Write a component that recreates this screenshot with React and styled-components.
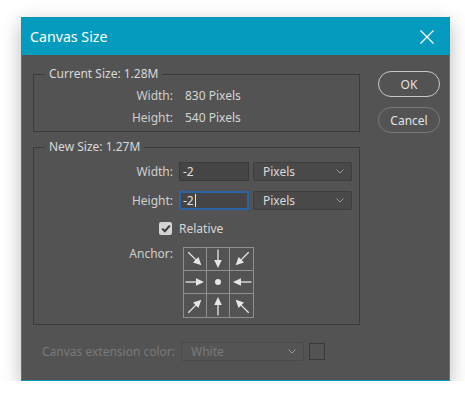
import React from 'react'
import styled, { createGlobalStyle } from 'styled-components'

const Global = createGlobalStyle`
  html, body { margin: 0; padding: 0; background: #ffffff; }
  body { font-family: "Noto Sans", "Open Sans", sans-serif; }
  * { box-sizing: border-box; }
`

const Window = styled.div`
  margin: 17px 0 0 21px;
  width: 429px;
  height: 364px;
  border: 1px solid #0a95b6;
  background: #535353;
  box-shadow: 0 6px 18px rgba(0, 0, 0, 0.28);
  display: flex;
  flex-direction: column;
`

const TitleBar = styled.div`
  height: 37px;
  background: #059bbe;
  display: flex;
  align-items: center;
  justify-content: space-between;
  padding: 0 15px 0 8px;
  color: #ffffff;
  font-size: 14.2px;
`

const Body = styled.div`
  flex: 1;
  display: grid;
  grid-template-columns: 327px 62px;
  column-gap: 18px;
  padding: 11px 0 0 11px;
  font-size: 12px;
  color: #d2d2d2;
`

const Left = styled.div`
  display: flex;
  flex-direction: column;
`

const Group = styled.fieldset`
  margin: 0 0 ${p => p.$gap || 0}px 0;
  padding: ${p => p.$pad};
  border: 1px solid #3b3b3b;
  min-width: 0;
  display: grid;
  grid-template-columns: 139px auto;
  column-gap: ${p => p.$col}px;
  row-gap: ${p => p.$row}px;
  align-items: center;
`

const Legend = styled.legend`
  margin-left: 11px;
  padding: 0 4px;
  line-height: 16px;
  color: #d8d8d8;
`

const Label = styled.div`
  text-align: right;
  line-height: 18px;
  color: #cfcfcf;
  align-self: ${p => (p.$top ? 'start' : 'center')};
  margin-top: ${p => (p.$top ? -2 : 0)}px;
`

const Value = styled.div`
  line-height: ${p => p.$lh || 18}px;
  color: #d6d6d6;
`

const Fields = styled.div`
  display: flex;
  gap: 4px;
`

const TextBox = styled.div`
  width: 70px;
  height: 19px;
  background: #454545;
  border: ${p => (p.$focus ? '2px solid #2a64a4' : '1px solid #3a3a3a')};
  padding-left: ${p => (p.$focus ? 2 : 3)}px;
  display: flex;
  align-items: center;
  color: #e0e0e0;
`

const Caret = styled.span`
  display: inline-block;
  width: 1px;
  height: 13px;
  background: #e8e8e8;
  margin-left: 1px;
`

const Select = styled.div`
  width: ${p => p.$w}px;
  height: 19px;
  background: ${p => (p.$dim ? '#545454' : '#494949')};
  border: 1px solid ${p => (p.$dim ? '#4a4a4a' : '#3e3e3e')};
  border-radius: 2px;
  padding: 0 7px 0 9px;
  display: flex;
  align-items: center;
  justify-content: space-between;
  color: ${p => (p.$dim ? '#7a7a7a' : '#dadada')};
`

const CheckCell = styled.div`
  display: flex;
  justify-content: flex-end;
  padding-right: 1px;
`

const CheckBox = styled.div`
  width: 13px;
  height: 13px;
  border-radius: 2px;
  background: #d4d4d4;
  display: flex;
  align-items: center;
  justify-content: center;
`

const Anchor = styled.div`
  width: 71px;
  height: 71px;
  margin-left: 4px;
  display: grid;
  grid-template-columns: repeat(3, 1fr);
  grid-template-rows: repeat(3, 1fr);
  border: 1px solid #8f8f8f;
`

const Cell = styled.div`
  border-right: ${p => (p.$c < 2 ? '1px solid #8f8f8f' : 'none')};
  border-bottom: ${p => (p.$r < 2 ? '1px solid #8f8f8f' : 'none')};
  display: flex;
  align-items: center;
  justify-content: center;
`

const Extension = styled.div`
  margin-top: 17px;
  padding-left: 9px;
  display: flex;
  align-items: center;
  gap: 6px;
  color: #7a7a7a;
`

const Swatch = styled.div`
  width: 16px;
  height: 17px;
  border: 1px solid #3a3a3a;
  margin-left: -1px;
`

const Buttons = styled.div`
  padding-top: 5px;
  display: flex;
  flex-direction: column;
  gap: 10px;
`

const Button = styled.div`
  height: 26px;
  border-radius: 13px;
  border: 1px solid ${p => (p.$primary ? '#c9c9c9' : '#7a7a7a')};
  display: flex;
  align-items: center;
  justify-content: center;
  color: #e2e2e2;
  font-size: 12px;
`

const Chevron = () => (
  <svg width="8" height="5" viewBox="0 0 8 5">
    <path d="M0.5 0.5 L4 4 L7.5 0.5" fill="none" stroke="#9a9a9a" strokeWidth="1" />
  </svg>
)

const Close = () => (
  <svg width="14" height="14" viewBox="0 0 14 14">
    <path d="M0.5 0.5 L13.5 13.5 M13.5 0.5 L0.5 13.5" stroke="#fff" strokeWidth="1.2" />
  </svg>
)

// rotation of the arrow (pointing right = 0) for each cell, toward the center
const angles = [45, 90, 135, 0, null, 180, -45, -90, -135]

const Arrow = ({ angle }) =>
  angle === null ? (
    <svg width="20" height="20" viewBox="0 0 20 20">
      <circle cx="10" cy="10" r="3" fill="#e6e6e6" />
    </svg>
  ) : (
    <svg width="20" height="20" viewBox="0 0 20 20">
      <g transform={`rotate(${angle} 10 10)`}>
        <path d="M0.5 10 L12 10" stroke="#e6e6e6" strokeWidth="1.3" />
        <path d="M19 10 L11 6.2 L11 13.8 Z" fill="#e6e6e6" />
      </g>
    </svg>
  )

export default function App() {
  return (
    <>
      <Global />
      <Window>
        <TitleBar>
          <span>Canvas Size</span>
          <Close />
        </TitleBar>
        <Body>
          <Left>
            <Group $pad="5px 0 4px 0" $col={12} $row={4} $gap={7}>
              <Legend>Current Size: 1.28M</Legend>
              <Label>Width:</Label>
              <Value>830 Pixels</Value>
              <Label>Height:</Label>
              <Value>540 Pixels</Value>
            </Group>
            <Group $pad="7px 0 6px 0" $col={6} $row={10}>
              <Legend>New Size: 1.27M</Legend>
              <Label>Width:</Label>
              <Fields>
                <TextBox>-2</TextBox>
                <Select $w={99}>
                  Pixels <Chevron />
                </Select>
              </Fields>
              <Label>Height:</Label>
              <Fields>
                <TextBox $focus>
                  -2<Caret />
                </TextBox>
                <Select $w={99}>
                  Pixels <Chevron />
                </Select>
              </Fields>
              <CheckCell>
                <CheckBox>
                  <svg width="10" height="9" viewBox="0 0 10 9">
                    <path d="M1.2 4.6 L3.8 7.2 L8.8 1.6" fill="none" stroke="#3a3a3a" strokeWidth="2" />
                  </svg>
                </CheckBox>
              </CheckCell>
              <Value $lh={17}>Relative</Value>
              <Label $top>Anchor:</Label>
              <Anchor>
                {angles.map((a, i) => (
                  <Cell key={i} $r={Math.floor(i / 3)} $c={i % 3}>
                    <Arrow angle={a} />
                  </Cell>
                ))}
              </Anchor>
            </Group>
            <Extension>
              <span>Canvas extension color:</span>
              <Select $w={123} $dim>
                White <Chevron />
              </Select>
              <Swatch />
            </Extension>
          </Left>
          <Buttons>
            <Button $primary>OK</Button>
            <Button>Cancel</Button>
          </Buttons>
        </Body>
      </Window>
    </>
  )
}
